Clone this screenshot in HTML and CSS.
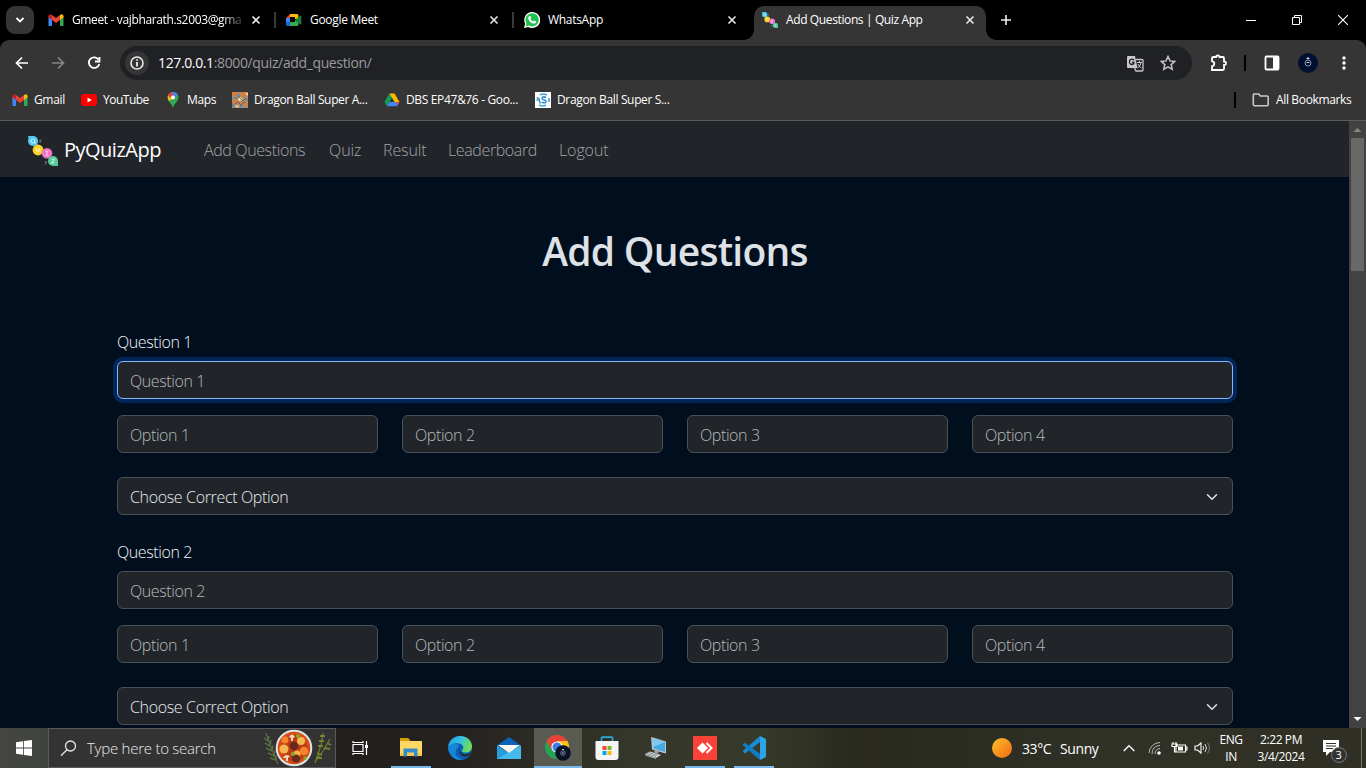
FILE: index.html
```html
<!DOCTYPE html>
<html lang="en">
<head>
<meta charset="utf-8">
<title>Add Questions | Quiz App</title>
<link rel="stylesheet" href="styles.css">
</head>
<body>
<svg class="defs" width="0" height="0">
  <defs>
    <linearGradient id="edgeG" x1="0" y1="0" x2="1" y2="0.3"><stop offset="0" stop-color="#1b9de2"/><stop offset=".55" stop-color="#35c1e0"/><stop offset="1" stop-color="#6ddc55"/></linearGradient>
    <linearGradient id="sunG" x1="0" y1="0" x2="1" y2="1"><stop offset="0" stop-color="#fcc02c"/><stop offset="1" stop-color="#f26a10"/></linearGradient>
    <symbol id="gmail" viewBox="0 0 16 12"><path fill="#4285f4" d="M1 12h3V5L.5 2v9q0 1 .5 1z"/><path fill="#34a853" d="M12 12h3q.5 0 .5-1V2L12 5z"/><path fill="#fbbc04" d="M12 1v5l3.500-2.700V2Q15-1 12 1z"/><path fill="#ea4335" d="M4 6V1l4 3 4-3v5L8 9z"/><path fill="#c5221f" d="M.5 3.300 4 6V1Q1-1 .5 2z"/></symbol>
    <symbol id="quizlogo" viewBox="0 0 30 30"><path fill="#51c9f1" d="M0 0h6l4 4-1 6-7-1z"/><circle cx="5" cy="5" r="5" fill="#51c9f1"/><circle cx="10" cy="14" r="5.400" fill="#f9d32a"/><circle cx="19" cy="17.300" r="5.300" fill="#f273c4"/><circle cx="25" cy="25" r="5" fill="#52c999"/><path fill="#52c999" d="M25 30h5v-6z"/><path fill="#666c70" d="M12 3l1.500 1-1 3-1.500-1zM17 25l2 0-1 4-1-1z"/><g fill="none" stroke="#fff" stroke-opacity=".6" stroke-width="1.200"><circle cx="5" cy="5" r="2"/><path d="M6 6l1.500 1.500M8.500 12v2q1.500 3.500 3 0v-2M17.500 15.300h3M19 15.300v4M17.500 19.500h3M23.500 23.200h3l-3 3.600h3"/></g></symbol>
    <symbol id="close" viewBox="0 0 10 10"><path d="M1.500 1.500l7 7M8.500 1.500l-7 7" fill="none" stroke="#e8e8e8" stroke-width="1.600"/></symbol>
    <symbol id="chev" viewBox="0 0 16 16"><path d="M2 5l6 6 6-6" fill="none" stroke="#dee2e6" stroke-width="2" stroke-linecap="round" stroke-linejoin="round"/></symbol>
  </defs>
</svg>

<div class="desktop">
  <header class="tabstrip">
    <div class="tabsearch"><svg width="10" height="8" viewBox="0 0 10 8"><path d="M1.500 2L5 5.500 8.500 2" fill="none" stroke="#fff" stroke-width="1.800"/></svg></div>
    <div class="tab sep"><svg width="16" height="12"><use href="#gmail"/></svg><span class="tabtitle fade">Gmeet - vajbharath.s2003@gma</span><svg width="10" height="10"><use href="#close"/></svg></div>
    <div class="tab sep"><svg width="16" height="16" viewBox="0 0 16 16"><path fill="#fbbc04" d="M4 2h7q1.500 0 1.500 1.500V7H9V5H4z"/><path fill="#ea4335" d="M4 2v4H0z"/><path fill="#4285f4" d="M0 6h4v4H0z"/><path fill="#1967d2" d="M0 10h4v4H1.500Q0 14 0 12.500z"/><path fill="#34a853" d="M4 10h5V8l3.500-1v5.500q0 1.500-1.500 1.500H4z"/><path fill="#188038" d="M9 8l5-4q1.300-1 1.300.5v7.500q0 1-1.300.2z"/></svg><span class="tabtitle">Google Meet</span><svg width="10" height="10"><use href="#close"/></svg></div>
    <div class="tab"><svg width="16" height="16" viewBox="0 0 16 16"><path fill="#fff" d="M0 16l1.200-4.200A8 8 0 1 1 4.200 14.900z"/><path fill="#1fc04d" d="M1.600 14.400l.9-3A6.600 6.600 0 1 1 4.800 13.600z"/><path fill="#fff" d="M5.300 4h1l.9 2-.8 1q1 1.900 2.700 2.600l1-1.100 2 1q0 2-2 2.200-4-.2-6-5.200Q4 5 5.300 4z"/></svg><span class="tabtitle">WhatsApp</span><svg width="10" height="10"><use href="#close"/></svg></div>
    <div class="tab active"><svg width="16" height="16"><use href="#quizlogo"/></svg><span class="tabtitle tight">Add Questions | Quiz App</span><svg width="10" height="10"><use href="#close"/></svg></div>
    <svg class="newtab" width="12" height="12" viewBox="0 0 12 12"><path d="M6 1v10M1 6h10" stroke="#f0f0f0" stroke-width="1.600"/></svg>
    <div class="wincontrols">
      <svg width="10" height="10" viewBox="0 0 10 10"><path d="M0 5.500h10" stroke="#fff"/></svg>
      <svg width="10" height="10" viewBox="0 0 10 10"><path d="M.5 2.500h7v7h-7zM2.500 2.500v-2h7v7h-2" fill="none" stroke="#fff"/></svg>
      <svg width="10" height="10" viewBox="0 0 10 10"><path d="M0 0l10 10M10 0L0 10" stroke="#fff" stroke-width="1.100"/></svg>
    </div>
  </header>

  <div class="chrome">
    <div class="toolbar">
      <div class="navbtns">
        <svg width="14" height="14" viewBox="0 0 14 14"><path d="M13 7H2M7 1.500L1.500 7 7 12.500" fill="none" stroke="#fff" stroke-width="1.700"/></svg>
        <svg width="14" height="14" viewBox="0 0 14 14"><path d="M1 7h11M7 1.500L12.500 7 7 12.500" fill="none" stroke="#858585" stroke-width="1.700"/></svg>
        <svg width="14" height="14" viewBox="0 0 14 14"><path d="M11.700 3.800A5.300 5.300 0 1 0 12.300 8" fill="none" stroke="#fff" stroke-width="1.800"/><path d="M12.500 1v4.500H8" fill="none" stroke="#fff" stroke-width="1.800"/></svg>
      </div>
      <div class="omnibox">
        <div class="siteinfo"><svg width="14" height="14" viewBox="0 0 14 14"><circle cx="7" cy="7" r="6" fill="none" stroke="#e8e8e8" stroke-width="1.600"/><path d="M7 3.200v1.600M7 6v4.500" stroke="#e8e8e8" stroke-width="1.800"/></svg></div>
        <span class="url"><b>127.0.0.1</b>:8000/quiz/add_question/</span>
        <svg class="translate" width="17" height="17" viewBox="0 0 17 17"><path d="M1 1h7l2.500 12H1q-1 0-1-1V2q0-1 1-1z" fill="#c7c7c7"/><path d="M9 4.500h6q1 0 1 1v9.500q0 1-1 1H9l-1.500-3" fill="none" stroke="#c7c7c7" stroke-width="1.300"/><path d="M7 5.300Q4.500 3 2.700 5.500 1.800 9 4.500 9.500 7 9.500 7 7.500H5" fill="none" stroke="#202124" stroke-width="1.300"/><path d="M10 7.500h5M12.500 6v1.500M14 8q-1 4-3.500 5M11 9q1 2.500 3.500 4" fill="none" stroke="#c7c7c7"/></svg>
        <svg width="16" height="16" viewBox="0 0 16 16"><path d="M8 1.500l2 4.400 4.800.5-3.600 3.200 1 4.700L8 11.900l-4.200 2.400 1-4.700L1.200 6.400 6 5.900z" fill="none" stroke="#c7c7c7" stroke-width="1.500"/></svg>
      </div>
      <svg class="ext" width="18" height="18" viewBox="0 0 18 18"><path d="M2 4.200Q2 3 3.200 3H6q0-1.500 1.800-1.500T9.500 3h3.300q1.200 0 1.200 1.200v3.300q2 0 2 1.800T14 11v3.800q0 1.200-1.200 1.200H2v-3.700q2.300-.5 2.300-2.500T2 7.200z" fill="none" stroke="#fff" stroke-width="1.800"/></svg>
      <i class="tbsep"></i>
      <svg class="panel" width="16" height="16" viewBox="0 0 16 16"><rect x="1.500" y="1.500" width="13" height="13" rx="1" fill="none" stroke="#fff" stroke-width="1.800"/><path d="M9 1h6v14H9z" fill="#fff"/></svg>
      <svg class="avatar" width="20" height="20" viewBox="0 0 20 20"><circle cx="10" cy="10" r="10" fill="#001030"/><circle cx="10" cy="10" r="3" fill="none" stroke="#8490a5"/><path d="M8.500 5.500h3M10 4v2.500M8.500 9.500h3" stroke="#cbd1db"/></svg>
      <svg width="4" height="16" viewBox="0 0 4 16"><g fill="#fff"><circle cx="2" cy="3" r="1.700"/><circle cx="2" cy="8" r="1.700"/><circle cx="2" cy="13" r="1.700"/></g></svg>
    </div>
    <div class="bookmarks">
      <div class="bm"><svg width="16" height="12"><use href="#gmail"/></svg><span>Gmail</span></div>
      <div class="bm"><svg width="16" height="16" viewBox="0 0 16 16"><rect y="2" width="16" height="12" rx="3" fill="#f00"/><path d="M6.500 5.500v5L10.800 8z" fill="#fff"/></svg><span class="yt">YouTube</span></div>
      <div class="bm"><svg width="16" height="16" viewBox="0 0 16 16"><path d="M8 0a5.500 5.500 0 0 1 5.500 5.500C13.500 9 9.500 11 8 16 6.500 11 2.500 9 2.500 5.500A5.500 5.500 0 0 1 8 0z" fill="#34a853"/><path d="M4 9.300L13 3Q11-1 6.500.2z" fill="#4285f4"/><path d="M3 3L8 6 4 9.300Q2 6.500 3 3z" fill="#fbbc04"/><path d="M3 3.300Q4 .8 6.500.2L8.500 2 5 6z" fill="#ea4335"/><circle cx="8" cy="5.500" r="2" fill="#fff"/></svg><span>Maps</span></div>
      <div class="bm"><svg width="16" height="16" viewBox="0 0 16 16"><path fill="#b08a6c" d="M0 0h16v16H0z"/><path fill="#e8792f" d="M0 0l5 1-2 3-3-1zM10 0l5 2-3 3-3-3zM2 8l4 1-1 2-5 1zM11 10l4 1-1 3-3-1z"/><path fill="#4a8cb5" d="M5 2l3 1-2 3zM13 6l3 1-2 2zM0 11l3 2-3 3zM8 12l3 2-3 2zM1 5l2 1-2 2z"/><path fill="#f4d9a4" d="M5 6l4-1 2 3-4 1zM3 13l4 1-2 2zM13 1h3v3z"/><path d="M3 5l2 2 2-2 4 4 3-3M3 12l3-2 3 3 4-3" fill="none" stroke="#6f5142" stroke-width=".8"/></svg><span>Dragon Ball Super A...</span></div>
      <div class="bm"><svg width="16" height="16" viewBox="0 0 16 16"><path fill="#0f9d58" d="M5.300 1.500L8 6 3.200 14.300.5 9.900z"/><path fill="#ffba00" d="M5.300 1.500h5.200l5 8.400h-5z"/><path fill="#4285f4" d="M5.500 9.900h10L13 14.300H3z"/><path fill="#ea4335" d="M12.200 9.900h3.300L13.700 13z"/><path fill="#353535" d="M8 6.200l2.200 3.700H5.800z"/></svg><span>DBS EP47&amp;76 - Goo...</span></div>
      <div class="bm"><svg width="16" height="16" viewBox="0 0 16 16"><path fill="#fff" d="M0 0h16v16H0z"/><path d="M5 3q3-2 7 0M4 13q4 2 7 0M2.500 5v4M14 6v4" fill="none" stroke="#4aa6d8" stroke-width="1.700"/><path d="M4 6q0 3 1.500 5.500M11 5.500Q8 4 7 6q0 1.500 2.300 2t1.500 2q-1 1.500-4 .3" fill="none" stroke="#2c91ca" stroke-width="1.500"/></svg><span>Dragon Ball Super S...</span></div>
      <i class="bmsep"></i>
      <div class="bm"><svg width="18" height="14" viewBox="0 0 18 14"><path d="M1.800 1h5l1.500 2H15q1.200 0 1.200 1.200v7.300q0 1.200-1.200 1.200H2.500q-1.200 0-1.200-1.200V2z" fill="none" stroke="#c7c7c7" stroke-width="1.600"/></svg><span>All Bookmarks</span></div>
    </div>
  </div>

  <div class="viewport">
    <main class="page">
      <nav class="navbar">
        <svg width="30" height="30"><use href="#quizlogo"/></svg>
        <a class="brand">PyQuizApp</a>
        <a class="snug">Add Questions</a><a>Quiz</a><a>Result</a><a class="snug">Leaderboard</a><a>Logout</a>
      </nav>
      <div class="container">
        <h1><span>Add Questions</span></h1>
        <section class="question">
          <div class="label">Question 1</div>
          <div class="field focused">Question 1</div>
          <div class="options"><div class="field">Option 1</div><div class="field">Option 2</div><div class="field">Option 3</div><div class="field">Option 4</div></div>
          <div class="field select"><span>Choose Correct Option</span><svg width="16" height="12"><use href="#chev"/></svg></div>
        </section>
        <section class="question">
          <div class="label">Question 2</div>
          <div class="field">Question 2</div>
          <div class="options"><div class="field">Option 1</div><div class="field">Option 2</div><div class="field">Option 3</div><div class="field">Option 4</div></div>
          <div class="field select"><span>Choose Correct Option</span><svg width="16" height="12"><use href="#chev"/></svg></div>
        </section>
      </div>
    </main>
    <div class="scrollbar">
      <svg width="17" height="17" viewBox="0 0 17 17"><path d="M4.500 11L8.500 7l4 4z" fill="#868686"/></svg>
      <i class="thumb"></i>
      <svg width="17" height="17" viewBox="0 0 17 17"><path d="M4.500 6h8l-4 4z" fill="#fff"/></svg>
    </div>
  </div>

  <footer class="taskbar">
    <div class="start"><svg width="16" height="16" viewBox="0 0 16 16"><path fill="#fff" d="M0 2.200L7 1.200V7.600H0zM7.800 1.100L16 0v7.600H7.800zM0 8.400h7v6.400l-7-1zM7.800 8.400H16V16l-8.200-1.100z"/></svg></div>
    <div class="search">
      <svg width="17" height="17" viewBox="0 0 17 17"><circle cx="10.500" cy="6" r="5" fill="none" stroke="#e6e6e6" stroke-width="1.300"/><path d="M7 9.700L1 15.800" stroke="#e6e6e6" stroke-width="1.300"/></svg>
      <span>Type here to search</span>
      <svg width="70" height="38" viewBox="0 0 70 38"><g fill="none" stroke="#5d7040" stroke-width="1.200"><path d="M3 4l6 17 6 14"/><path stroke-width="1.400" d="M1 9l4 3 1-5M2 14l5 3 1-6M3 19l6 3 1-6M5 24l6 3 1-6M7 29l6 2 0-5"/></g><g fill="none" stroke="#74822f" stroke-width="1.100"><path d="M60 4l-2 12-6 18M67 10l-7 12-8 11"/><path stroke-width="1.800" d="M57 7h5M56 12h5M55 17h5M64 14l4 2M61 19l6 1M54 24l5 2M53 29l6 0"/></g><circle cx="31" cy="19" r="18.300" fill="#dce4ea"/><circle cx="31" cy="19" r="16.300" fill="#d84c15"/><path d="M17 18q4-10 16-12 13 5 12 18-7 10-18 8-9-4-10-14z" fill="#bd3c12"/><g fill="#f8b650"><circle cx="21" cy="20" r="4.500"/><circle cx="38" cy="12" r="4"/><circle cx="34" cy="25" r="3.500"/></g><g fill="#f6832d"><circle cx="22" cy="11" r="3.500"/><circle cx="41" cy="22" r="4.300"/></g><g fill="#672a20"><circle cx="31" cy="17" r="4.200"/><circle cx="33" cy="29.500" r="4"/></g><g fill="#f1d7bd"><path d="M26 8q3-5 6 0l-2 1v3h-2V9zM20 29q2-5 7-2l-2 2v3h-2v-3z"/></g><g fill="#83ad29"><circle cx="35" cy="7" r="2"/><circle cx="30" cy="25" r="2"/><circle cx="42" cy="29" r="1.800"/></g></svg>
    </div>
    <div class="app taskview"><svg width="18" height="18" viewBox="0 0 18 18"><g fill="none" stroke="#fff" stroke-width="1.200"><path d="M2 5.500h10v7H2zM2 2v1.500h10V2M2 16v-1.500h10V16M15.500 2v14"/></g><path fill="#fff" d="M14 6h3v3h-3z"/></svg></div>
    <div class="app open"><svg width="24" height="24" viewBox="0 0 24 24"><path fill="#d9a000" d="M1 2h8l2 2v5H1z"/><path fill="#ffd766" d="M1 5h22v15H1z"/><path fill="#f8c64e" d="M1 17h22v3H1z"/><path fill="#328ccb" d="M4.500 20.500v-8h14v8H15v-4H8v4z"/></svg></div>
    <div class="app"><svg width="24" height="24" viewBox="0 0 24 24"><circle cx="12" cy="12" r="12" fill="#0c5eb2"/><path fill="url(#edgeG)" d="M.1 11C1 4 6 0 12 0c8 0 12 5.500 12 10.500 0 4-3 6-6.500 6-4 0-4-2-3-3 1.500-1.500 1-5-3-6Q5 6 .1 11z"/><path fill="#1687d4" d="M0 12Q3 7 8.500 8q3 .5 2.500 2-4 4-1 9 2 3 6 4Q8 26 3 19 0 15 0 12z"/><path fill="#25261f" d="M11.500 11q-1 5 3.500 7 4 1.500 9-1.500l1 2-2 1.500q-4 2-8 .5-5-3-3.500-9.500z"/><path fill="#0c5eb2" d="M10 11Q8 18 15 20.300q4 1 7.500-2Q20 23 15 23.700 6 22 8 14z"/></svg></div>
    <div class="app"><svg width="24" height="24" viewBox="0 0 24 24"><path fill="#0b64b7" d="M0 9.500L12 1l12 8.500V12H0z"/><path fill="#279edb" d="M0 9.500l12 7.500L24 9.500V23H0z"/><path fill="#45b9ed" d="M0 23L24 9.500V23z"/><path fill="#f6f6f5" d="M1 9h22l-11 8z"/></svg></div>
    <div class="app open current"><svg width="26" height="26" viewBox="0 0 26 26"><circle cx="12" cy="12" r="12" fill="#23a455"/><path fill="#ea4335" d="M1.600 6A12 12 0 0 1 22.400 6H12L6.500 14.500z"/><path fill="#fbc116" d="M12 6h10.400A12 12 0 0 1 12 24l5-9z"/><circle cx="12" cy="12" r="5.600" fill="#fff"/><circle cx="12" cy="12" r="4.500" fill="#377ee8"/><circle cx="18" cy="18" r="7.800" fill="#071227"/><circle cx="18" cy="18" r="2.300" fill="none" stroke="#8590a5" stroke-width=".8"/><path d="M17 14.500h2M17 18h2" stroke="#b7c0cc"/></svg></div>
    <div class="app"><svg width="24" height="24" viewBox="0 0 24 24"><path d="M6.500 6V2q0-.8.8-.8h9.400q.8 0 .8.800v4" fill="none" stroke="#28a9d9" stroke-width="1.700"/><path d="M.5 5h23v16q0 3-3 3h-17q-3 0-3-3z" fill="#f5f5f5"/><path fill="#ef4f2f" d="M7.500 10h4v4h-4z"/><path fill="#78b928" d="M12.500 10h4v4h-4z"/><path fill="#0aa2e9" d="M7.500 15h4v4h-4z"/><path fill="#f9b900" d="M12.500 15h4v4h-4z"/></svg></div>
    <div class="app"><svg width="24" height="24" viewBox="0 0 24 24"><path fill="#bcc5cc" d="M7 1l2 .5 13 4v12l-4-1-10-3z"/><path fill="#46a9e4" d="M8.500 2.500L21 6v10L9.500 12.500z"/><path fill="#7dc9f4" d="M8.500 2.500L21 6 9.300 11z"/><path fill="#d4dadd" d="M1 18l5-2.500L17 19l-5 3z"/><path fill="#9ea7ac" d="M1 18l11 4v1L1 19.500zM11 13.500l4 1-1 3-4-1z"/><path d="M5 16.500l9 3M3 17.500l9 3" stroke="#777f83" stroke-width=".8"/></svg></div>
    <div class="app open"><svg width="24" height="24" viewBox="0 0 24 24"><path fill="#fa4238" d="M0 0h24v24H0z"/><path fill="#fff" d="M9.500 6.500L15 12l-5.500 5.500L4 12z"/><path d="M13.500 7l5 5-5 5" fill="none" stroke="#fff" stroke-width="2"/></svg></div>
    <div class="app open"><svg width="24" height="24" viewBox="0 0 24 24"><path fill="#168bd4" d="M18 0v6.300L3 17.500 1 15.800v-1z"/><path fill="#117cc1" d="M1 8.500L3 6.800l15 11V24L1 9.500z"/><path fill="#2ba4e8" d="M18 0l6 3v18l-6 3z"/></svg></div>
    <div class="tray">
      <svg width="20" height="20" viewBox="0 0 20 20"><circle cx="10" cy="10" r="10" fill="url(#sunG)"/></svg>
      <span>33°C</span><span>Sunny</span>
      <svg width="12" height="8" viewBox="0 0 12 8"><path d="M.7 7L6 1.700 11.300 7" fill="none" stroke="#fff" stroke-width="1.300"/></svg>
      <svg width="14" height="14" viewBox="0 0 14 14"><g fill="none" stroke="#b8b8b4"><path d="M1 12A11 11 0 0 1 12 1.500M4 13q0-8 8-8.500M7 13q0-5 5-5.500"/></g><circle cx="11" cy="12" r="1.800" fill="#fff"/></svg>
      <svg width="17" height="14" viewBox="0 0 17 14"><path d="M5 4h9.500v7H5zM14.500 6H16v3h-1.500M3.500 6v5H5M1 3h5v2.500H1zM2 1v2M5 1v2" fill="none" stroke="#fff" stroke-width="1.100"/><path fill="#fff" d="M7 5.500h5v4H7z"/></svg>
      <svg width="17" height="14" viewBox="0 0 17 14"><path d="M1 5h2.500L7 2v10L3.500 9H1z" fill="none" stroke="#fff" stroke-width="1.100"/><path d="M9 5q1.500 2 0 4M11 3q3 4 0 8" fill="none" stroke="#ddd"/><path d="M13.500 1.500q4 5.500 0 11" fill="none" stroke="#777"/></svg>
      <div class="stack"><span>ENG</span><span>IN</span></div>
      <div class="stack"><span>2:22 PM</span><span>3/4/2024</span></div>
      <div class="notice"><svg width="17" height="17" viewBox="0 0 17 17"><path fill="#fff" d="M0 0h16v12h-9l-4 4v-4H0z"/><path d="M3 3.500h10M3 6h10M3 8.500h7" stroke="#303128"/></svg><b>3</b></div>
      <i class="peek"></i>
    </div>
  </footer>
</div>
</body>
</html>
```
FILE: styles.css
```css
* { box-sizing: border-box; }
body { margin: 0; background: #000; color: #fff; font-family: "Open Sans", "Noto Sans", sans-serif; overflow: hidden; }
svg { display: block; flex: none; }
.defs { position: absolute; }
.desktop { width: 1366px; height: 768px; display: grid; grid-template-rows: 40px 81px 607px 40px; }
span, a { white-space: nowrap; }

/* Tabs */
.tabstrip { display: flex; align-items: center; padding-left: 6px; background: #000; }
.tabsearch { width: 28px; height: 28px; margin-right: 6px; border-radius: 9px; background: #353535; display: grid; place-items: center; }
.tab { width: 238px; height: 40px; padding: 0 17px 0 8px; display: flex; align-items: center; gap: 8px; font-size: 12px; letter-spacing: -0.3px; position: relative; }
.tabtitle { flex: 1; min-width: 0; line-height: 18px; }
.fade { letter-spacing: -0.36px; mask-image: linear-gradient(90deg, #000 88%, rgba(0, 0, 0, 0.15) 100%); }
.tight { letter-spacing: -0.38px; }
.tab > svg:last-child { margin-left: auto; }
.sep::after { content: ""; position: absolute; right: 2px; top: 12px; width: 2px; height: 16px; background: #393939; }
.active { width: 232px; height: 34px; align-self: flex-end; background: #353535; border-radius: 10px 10px 0 0; padding: 0 11px 6px 8px; }
.active::before, .active::after { content: ""; position: absolute; bottom: 0; width: 10px; height: 10px; }
.active::before { left: -10px; background: radial-gradient(circle at 0 0, transparent 9.5px, #353535 10px); }
.active::after { right: -10px; background: radial-gradient(circle at 100% 0, transparent 9.5px, #353535 10px); }
.newtab { margin-left: 14px; }
.wincontrols { margin-left: auto; display: flex; gap: 36px; padding-right: 18px; }

/* Toolbar */
.chrome { background: #353535; border-bottom: 1px solid #5c5c5c; border-radius: 9px 9px 0 0; }
.toolbar { height: 46px; display: flex; align-items: center; }
.navbtns { width: 120px; display: flex; gap: 22px; padding-left: 15px; }
.omnibox { width: 1072px; height: 34px; border-radius: 17px; background: #202124; display: flex; align-items: center; padding: 0 16px 0 5px; }
.siteinfo { width: 24px; height: 24px; border-radius: 50%; background: #353535; display: grid; place-items: center; margin-right: 9px; }
.url { font-size: 14px; color: #9a9b9d; line-height: 20px; letter-spacing: -0.37px; }
.url b { font-weight: 400; color: #fff; }
.translate { margin-left: auto; margin-right: 16px; }
.ext { margin-left: 18px; margin-right: 16px; }
.tbsep, .bmsep { width: 2px; height: 16px; background: #000; }
.panel { margin-left: 18px; }
.avatar { margin: 0 24px 0 18px; }
.bookmarks { height: 34px; padding: 0 0 6px 12px; display: grid; align-items: center; grid-template-columns: 69px 84px 67px 152px 151px 699px 18px 110px; font-size: 12px; letter-spacing: -0.35px; }
.bm { display: flex; align-items: center; gap: 6px; line-height: 18px; }
.yt { letter-spacing: -0.5px; }

/* Web page */
.viewport { display: grid; grid-template-columns: 1349px 17px; overflow: hidden; }
.page { background: #000e1e; overflow: hidden; color: #dee2e6; font-weight: 300; }
.navbar { height: 56px; background: #212529; display: grid; grid-template-columns: 36px 140px 125px 54px 65px 111px 60px; align-items: center; padding: 0 0 0 28px; color: #a2a4a6; font-size: 16px; letter-spacing: -0.1px; }
.navbar svg { margin-top: 3px; }
.navbar a { padding-top: 1px; }
.navbar .snug { letter-spacing: -0.38px; }
.navbar .brand { color: #fff; font-size: 20px; font-weight: 400; letter-spacing: -0.5px; padding: 0; }
.container { width: 1116px; margin-left: 117px; }
h1 { margin: 50px 0 0; height: 96px; line-height: 48px; font-size: 39px; font-weight: 600; text-align: center; letter-spacing: -0.75px; }
.question { height: 210px; padding-top: 7px; letter-spacing: -0.4px; }
.label { line-height: 24px; margin-bottom: 7px; color: #f4f6f8; }
.field { height: 38px; border: 1px solid #495057; border-radius: 6px; background: #212529; color: #b6b9bc; padding: 1px 12px 0; line-height: 36px; font-size: 16px; }
.focused { border-color: #86b7fe; box-shadow: 0 0 0 4px #032557; }
.options { display: grid; grid-template-columns: repeat(4, 261px); gap: 24px; margin: 16px 0 24px; }
.select { color: #e8ecf0; display: flex; align-items: center; justify-content: space-between; letter-spacing: -0.35px; }
.scrollbar { background: #424242; display: flex; flex-direction: column; align-items: center; }
.thumb { width: 13px; height: 133px; background: #686868; margin-bottom: auto; }

/* Taskbar */
.taskbar { display: flex; background: linear-gradient(90deg, #454440 0, #3d453e 48px, #211e1d 336px, #24211f 450px, #33362a 620px, #363a29 760px, #29291f 860px, #303127 1120px, #302f25 1366px); }
.start { width: 48px; display: grid; place-items: center; }
.search { width: 288px; background: #333; border: 1px solid #5a5a5a; display: flex; align-items: center; padding-left: 11px; font-size: 15px; font-weight: 300; letter-spacing: -0.25px; color: #e8e8e8; }
.search span { margin-left: 10px; width: 176px; }
.app { width: 48px; margin-right: 1px; display: grid; place-items: center; }
.taskview { width: 48px; margin-right: 3px; }
.open { box-shadow: inset 0 -2px #76b9ed; width: 40px; margin: 0 5px 0 4px; }
.current { background: #5a5b50; width: 48px; margin: 0 1px 0 0; }
.tray { margin-left: auto; display: grid; grid-template-columns: 30px 38px 63px 25px 23px 23px 18px 38px 62px 38px 16px; align-items: center; font-size: 14px; letter-spacing: -0.4px; }
.stack { display: flex; flex-direction: column; align-items: center; font-size: 12px; line-height: 17px; }
.notice { position: relative; justify-self: center; }
.notice b { position: absolute; left: 8px; top: 7px; width: 16px; height: 16px; border: 1px solid #777; border-radius: 50%; background: #333; font: 400 11px/14px "Open Sans", sans-serif; text-align: center; }
.peek { width: 1px; height: 40px; margin-left: 11px; background: #777; }
```
